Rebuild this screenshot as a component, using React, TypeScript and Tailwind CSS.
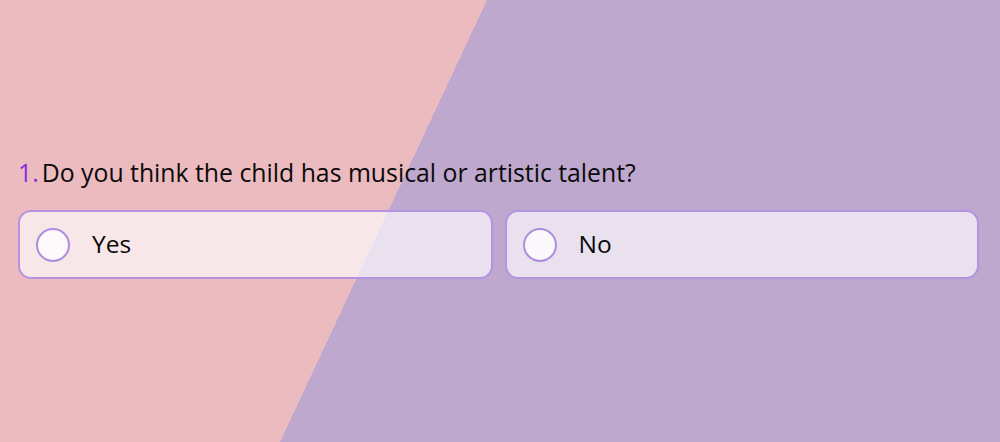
import React from 'react'

const options = ['Yes', 'No']

const App = () => {
  return (
    <div
      className="w-[1000px] h-[442px] overflow-hidden bg-[linear-gradient(115.1deg,#ecbbc0_40.35%,#bfa8cd_40.35%)] pl-[18px] pr-[21px] pt-[155px]"
      style={{ fontFamily: '"Open Sans", sans-serif' }}
    >
      <h2 className="flex items-baseline gap-[3px] text-[24.8px] leading-[34px] text-[#0a0a0a]">
        <span className="text-[#8a2be2]">1.</span>
        <span>Do you think the child has musical or artistic talent?</span>
      </h2>
      <div className="mt-[21px] flex gap-[12px]">
        {options.map((opt) => (
          <button
            key={opt}
            className="flex h-[69px] flex-1 items-center gap-[22px] rounded-[13px] border-2 border-[#b494e0] bg-white/65 pl-[16px] text-left"
          >
            <span className="h-[34px] w-[34px] rounded-full border-2 border-[#ad8ddc] bg-white/75" />
            <span className="text-[24.5px] text-[#0a0a0a]">{opt}</span>
          </button>
        ))}
      </div>
    </div>
  )
}

export default App
